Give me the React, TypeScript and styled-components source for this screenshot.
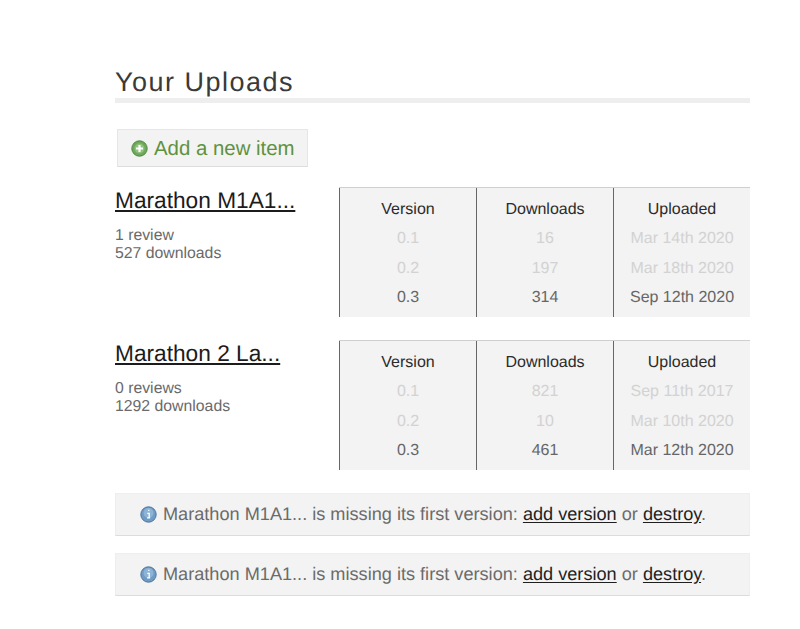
import React from "react";
import styled, { createGlobalStyle } from "styled-components";

const Global = createGlobalStyle`
  html, body { margin: 0; padding: 0; background: #fff; }
  body { font-family: "Liberation Sans", Arial, sans-serif; text-rendering: geometricPrecision; }
`;

const Page = styled.main`
  width: 635px;
  margin-left: 115px;
  padding-top: 65px;
  padding-bottom: 33px;
`;

const Title = styled.h1`
  margin: 0;
  height: 33px;
  border-bottom: 5px solid #eeeeee;
  font-size: 27px;
  line-height: 34px;
  font-weight: 400;
  letter-spacing: 1.5px;
  color: #3a3a3a;
`;

const AddButton = styled.a`
  display: flex;
  align-items: center;
  gap: 6px;
  box-sizing: border-box;
  width: 191px;
  height: 38px;
  margin: 26px 0 20px 2px;
  padding: 2px 0 0 13px;
  background: #f3f3f3;
  border: 1px solid #e6e6e6;
  border-bottom-color: #dddddd;
  font-size: 20.4px;
  color: #5e9240;
`;

const PlusSvg = styled.svg`
  margin-top: -2px;
`;

const Item = styled.section`
  display: flex;
  justify-content: space-between;
  align-items: flex-start;
  margin-bottom: 23px;
`;

const Summary = styled.div`
  width: 224px;
`;

const ItemName = styled.a`
  display: inline-block;
  font-size: 22.7px;
  line-height: 26px;
  color: #1c1c1c;
  text-decoration: underline;
  text-decoration-thickness: 2px;
  text-underline-offset: 2px;
`;

const Stats = styled.p`
  margin: 14px 0 0;
  font-size: 15.8px;
  line-height: 18px;
  color: #6a6a6a;
`;

const VersionTable = styled.div`
  display: grid;
  grid-template-columns: repeat(3, 137px);
  width: 411px;
  height: 130px;
  box-sizing: border-box;
  background: #f3f3f3;
  border-top: 1px solid #cfcfcf;
`;

const Column = styled.div`
  display: grid;
  grid-auto-rows: 29.5px;
  padding-top: 6.5px;
  border-left: 1px solid #666666;
  text-align: center;
`;

const Cell = styled.div<{ $tone: "head" | "old" | "current" }>`
  font-size: 16px;
  line-height: 29.5px;
  color: ${(p) => (p.$tone === "head" ? "#2b2b2b" : p.$tone === "old" ? "#d2d2d2" : "#666666")};
`;

const Notices = styled.div`
  display: flex;
  flex-direction: column;
  gap: 17px;
`;

const Notice = styled.div`
  display: flex;
  align-items: center;
  gap: 6px;
  box-sizing: border-box;
  height: 43px;
  padding-left: 24px;
  background: #f3f3f3;
  border: 1px solid #eeeeee;
  border-bottom-color: #dcdcdc;
  font-size: 18.15px;
  color: #6b6b6b;
  white-space: pre;
`;

const NoticeLink = styled.a`
  color: #1f1f1f;
  text-decoration: underline;
  text-underline-offset: 2px;
`;

const PlusIcon = () => (
  <PlusSvg width="17" height="17" viewBox="0 0 17 17" aria-hidden="true">
    <circle cx="8.5" cy="8.5" r="7.7" fill="#6fa85a" stroke="#4f8a3e" />
    <circle cx="8.5" cy="8.5" r="5" fill="#8fc07c" />
    <path d="M8.5 5v7M5 8.5h7" stroke="#fff" strokeWidth="2.2" />
  </PlusSvg>
);

const InfoIcon = () => (
  <svg width="17" height="17" viewBox="0 0 17 17" aria-hidden="true">
    <circle cx="8.5" cy="8.5" r="7.7" fill="#6f9bc4" stroke="#4c76a0" />
    <circle cx="8.5" cy="7" r="5" fill="#8db3d6" />
    <path d="M7.3 7.3h1.9v4.2M7 11.8h3.2M8.2 4.4h1.2" stroke="#fff" strokeWidth="1.3" fill="none" />
  </svg>
);

const items = [
  {
    name: "Marathon M1A1...",
    reviews: "1 review",
    downloads: "527 downloads",
    rows: [["0.1", "16", "Mar 14th 2020"], ["0.2", "197", "Mar 18th 2020"], ["0.3", "314", "Sep 12th 2020"]],
  },
  {
    name: "Marathon 2 La...",
    reviews: "0 reviews",
    downloads: "1292 downloads",
    rows: [["0.1", "821", "Sep 11th 2017"], ["0.2", "10", "Mar 10th 2020"], ["0.3", "461", "Mar 12th 2020"]],
  },
];

const heads = ["Version", "Downloads", "Uploaded"];

export default function App() {
  return (
    <Page>
      <Global />
      <Title>Your Uploads</Title>
      <AddButton>
        <PlusIcon />
        Add a new item
      </AddButton>
      {items.map((item) => (
        <Item key={item.name}>
          <Summary>
            <ItemName>{item.name}</ItemName>
            <Stats>
              {item.reviews}
              <br />
              {item.downloads}
            </Stats>
          </Summary>
          <VersionTable>
            {heads.map((head, c) => (
              <Column key={head}>
                <Cell $tone="head">{head}</Cell>
                {item.rows.map((row, r) => (
                  <Cell key={r} $tone={r === 2 ? "current" : "old"}>
                    {row[c]}
                  </Cell>
                ))}
              </Column>
            ))}
          </VersionTable>
        </Item>
      ))}
      <Notices>
        {[0, 1].map((n) => (
          <Notice key={n}>
            <InfoIcon />
            <span>
              Marathon M1A1... is missing its first version: <NoticeLink>add version</NoticeLink> or{" "}
              <NoticeLink>destroy</NoticeLink>.
            </span>
          </Notice>
        ))}
      </Notices>
    </Page>
  );
}
